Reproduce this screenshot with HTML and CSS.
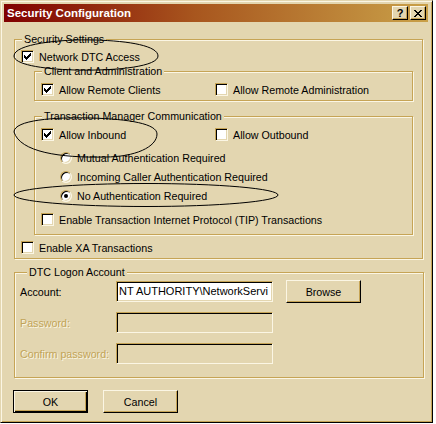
FILE: index.html
```html
<!DOCTYPE html>
<html>
<head>
<meta charset="utf-8">
<link rel="stylesheet" href="styles.css">
</head>
<body>
<div class="window">
  <div class="titlebar">
    <span class="title">Security Configuration</span>
    <div class="tb-buttons">
      <span class="tb-btn help">?</span>
      <span class="tb-btn close"><svg width="8" height="7" viewBox="0 0 8 7" shape-rendering="crispEdges"><path d="M0 0h2v1H0z M6 0h2v1H6z M1 1h2v1H1z M5 1h2v1H5z M2 2h4v1H2z M3 3h2v1H3z M2 4h4v1H2z M1 5h2v1H1z M5 5h2v1H5z M0 6h2v1H0z M6 6h2v1H6z" fill="#000"/></svg></span>
    </div>
  </div>
  <div class="content">
    <fieldset class="group g-security">
      <legend>Security Settings</legend>
      <label class="opt r-network"><span class="cb"><svg class="check" width="7" height="7" viewBox="0 0 7 7" shape-rendering="crispEdges"><path d="M6 0h1v1H6z M5 1h2v1H5z M0 2h1v1H0z M4 2h3v1H4z M0 3h2v1H0z M3 3h3v1H3z M0 4h5v1H0z M1 5h3v1H1z M2 6h1v1H2z" fill="#000"/></svg></span>Network DTC Access</label>
      <fieldset class="group g-sub g-client">
        <legend>Client and Administration</legend>
        <div class="pair r-client">
          <label class="opt col1"><span class="cb"><svg class="check" width="7" height="7" viewBox="0 0 7 7" shape-rendering="crispEdges"><path d="M6 0h1v1H6z M5 1h2v1H5z M0 2h1v1H0z M4 2h3v1H4z M0 3h2v1H0z M3 3h3v1H3z M0 4h5v1H0z M1 5h3v1H1z M2 6h1v1H2z" fill="#000"/></svg></span>Allow Remote Clients</label>
          <label class="opt"><span class="cb"></span>Allow Remote Administration</label>
        </div>
      </fieldset>
      <fieldset class="group g-sub g-tm">
        <legend>Transaction Manager Communication</legend>
        <div class="pair r-inbound">
          <label class="opt col1"><span class="cb"><svg class="check" width="7" height="7" viewBox="0 0 7 7" shape-rendering="crispEdges"><path d="M6 0h1v1H6z M5 1h2v1H5z M0 2h1v1H0z M4 2h3v1H4z M0 3h2v1H0z M3 3h3v1H3z M0 4h5v1H0z M1 5h3v1H1z M2 6h1v1H2z" fill="#000"/></svg></span>Allow Inbound</label>
          <label class="opt"><span class="cb"></span>Allow Outbound</label>
        </div>
        <div class="radios">
          <label class="ropt"><span class="rb"></span>Mutual Authentication Required</label>
          <label class="ropt"><span class="rb"></span>Incoming Caller Authentication Required</label>
          <label class="ropt"><span class="rb on"></span>No Authentication Required</label>
        </div>
        <label class="opt r-tip"><span class="cb"></span>Enable Transaction Internet Protocol (TIP) Transactions</label>
      </fieldset>
      <label class="opt r-xa"><span class="cb"></span>Enable XA Transactions</label>
    </fieldset>
    <fieldset class="group g-dtc">
      <legend>DTC Logon Account</legend>
      <div class="frow">
        <span class="flabel">Account:</span>
        <span class="tbox">NT AUTHORITY\NetworkServi</span>
        <span class="btn browse">Browse</span>
      </div>
      <div class="frow">
        <span class="flabel disabled">Password:</span>
        <span class="tbox off"></span>
      </div>
      <div class="frow">
        <span class="flabel disabled">Confirm password:</span>
        <span class="tbox off"></span>
      </div>
    </fieldset>
    <div class="buttons">
      <span class="btn default">OK</span>
      <span class="btn">Cancel</span>
    </div>
  </div>
</div>
<svg class="marks" width="436" height="424" viewBox="0 0 436 424">
  <path d="M14,56 C14,44 60,39 95,40 C130,41 158,46 158,56 C158,66 120,71 75,70 C40,69 14,64 14,56 Z" fill="none" stroke="#000" stroke-width="1"/>
  <path d="M14,132 C14,120 55,117 90,118 C130,119 157,124 157,134 C157,147 135,157 105,157 C60,158 20,152 14,132 Z" fill="none" stroke="#000" stroke-width="1"/>
  <ellipse cx="146" cy="195" rx="132" ry="11.5" fill="none" stroke="#000" stroke-width="1"/>
</svg>
</body>
</html>
```

FILE: styles.css
```css
:root {
  --bg: #e3d6b0;
  --sh: #c6a455;
  --hi: #fbf6e4;
}

html, body {
  margin: 0;
  padding: 0;
  background: #ffffff;
}

body {
  font-family: "Liberation Sans", Arial, sans-serif;
  font-size: 10.7px;
  color: #000;
  width: 436px;
  height: 424px;
  overflow: hidden;
}

.window {
  width: 433px;
  height: 423px;
  box-sizing: border-box;
  background: var(--bg);
  border: 1px solid;
  border-color: var(--bg) #000 #000 var(--bg);
  box-shadow: inset 1px 1px 0 var(--hi), inset -1px -1px 0 var(--sh);
  padding: 3px 4px 3px 3px;
}

.titlebar {
  height: 18px;
  display: flex;
  align-items: center;
  justify-content: space-between;
  padding: 0 2px 0 3px;
  background: linear-gradient(to right, #800000 0%, #a8561e 45%, #c9a048 100%);
}

.title {
  color: #fff;
  font-weight: bold;
  font-size: 11.5px;
}

.tb-buttons {
  display: flex;
  gap: 2px;
}

.tb-btn {
  width: 16px;
  height: 14px;
  box-sizing: border-box;
  background: var(--bg);
  border: 1px solid;
  border-color: var(--hi) #000 #000 var(--hi);
  box-shadow: inset -1px -1px 0 var(--sh);
  display: flex;
  align-items: center;
  justify-content: center;
  font-weight: bold;
  font-size: 11px;
  line-height: 1;
}

.content {
  padding: 1px 0 0 9px;
}

fieldset.group {
  margin: 0;
  padding: 0;
  min-inline-size: 0;
  box-sizing: border-box;
  border: 1px solid var(--sh);
  box-shadow: inset 1px 1px 0 var(--hi), 1px 1px 0 var(--hi);
}

fieldset.group > legend {
  padding: 0 2px;
  margin-left: 7px;
  line-height: 13px;
  background: var(--bg);
}

.g-security {
  width: 409px;
  margin: 10px 0 0 1px !important;
  padding: 0 0 3px 0 !important;
}

.g-sub {
  width: 379px;
  margin-left: 19px !important;
}

.g-client {
  margin-top: 1px !important;
  padding-bottom: 3px !important;
}

.g-tm {
  margin-top: 9px !important;
  padding-bottom: 7px !important;
}

.g-dtc {
  width: 410px;
  margin: 7px 0 0 1px !important;
  padding: 1px 0 12px 5px !important;
}

.opt {
  display: flex;
  align-items: center;
  gap: 5px;
  height: 15px;
  white-space: nowrap;
}

.r-network {
  margin: 3px 0 0 6px;
}

.r-xa {
  margin: 5px 0 0 6px;
}

.pair {
  display: flex;
  margin: 4px 0 0 6px;
}

.col1 {
  width: 174px;
}

.r-tip {
  margin: 7px 0 0 6px;
}

.cb {
  width: 13px;
  height: 13px;
  box-sizing: border-box;
  flex: none;
  background: #fff;
  border: 1px solid;
  border-color: var(--sh) var(--hi) var(--hi) var(--sh);
  box-shadow: inset 1px 1px 0 #000, inset -1px -1px 0 var(--bg);
  padding: 2px;
}

.check {
  display: block;
}

.radios {
  margin: 6px 0 0 25px;
}

.ropt {
  display: flex;
  align-items: center;
  gap: 5px;
  height: 19px;
  white-space: nowrap;
}

.rb {
  width: 12px;
  height: 12px;
  box-sizing: border-box;
  flex: none;
  border-radius: 50%;
  background: #fff;
  border: 1px solid;
  border-color: var(--sh) var(--hi) var(--hi) var(--sh);
  box-shadow: inset 1px 1px 0 #000, inset -1px -1px 0 var(--bg);
  display: flex;
  align-items: center;
  justify-content: center;
}

.rb.on::after {
  content: "";
  width: 4px;
  height: 4px;
  border-radius: 50%;
  background: #000;
}

.frow {
  display: flex;
  align-items: center;
  height: 23px;
  margin-bottom: 8px;
}

.frow:last-child {
  margin-bottom: 0;
}

.flabel {
  width: 96px;
  flex: none;
  white-space: nowrap;
}

.flabel.disabled {
  color: #c2a458;
  text-shadow: 1px 1px 0 var(--hi);
}

.tbox {
  width: 157px;
  height: 21px;
  box-sizing: border-box;
  flex: none;
  background: #fff;
  border: 1px solid;
  border-color: var(--sh) var(--hi) var(--hi) var(--sh);
  box-shadow: inset 1px 1px 0 #000, inset -1px -1px 0 var(--bg);
  padding: 0 0 0 2px;
  line-height: 19px;
  font-size: 11px;
  white-space: nowrap;
  overflow: hidden;
}

.tbox.off {
  background: var(--bg);
}

.btn {
  width: 75px;
  height: 23px;
  box-sizing: border-box;
  flex: none;
  display: flex;
  align-items: center;
  justify-content: center;
  background: var(--bg);
  border: 1px solid;
  border-color: var(--hi) #000 #000 var(--hi);
  box-shadow: inset -1px -1px 0 var(--sh);
}

.btn.default {
  border-color: #000;
  box-shadow: inset 1px 1px 0 var(--hi), inset -1px -1px 0 #000, inset -2px -2px 0 var(--sh);
}

.browse {
  margin-left: 13px;
}

.buttons {
  display: flex;
  gap: 15px;
  margin: 12px 0 0 0;
}

.marks {
  position: absolute;
  left: 0;
  top: 0;
  pointer-events: none;
}
```
